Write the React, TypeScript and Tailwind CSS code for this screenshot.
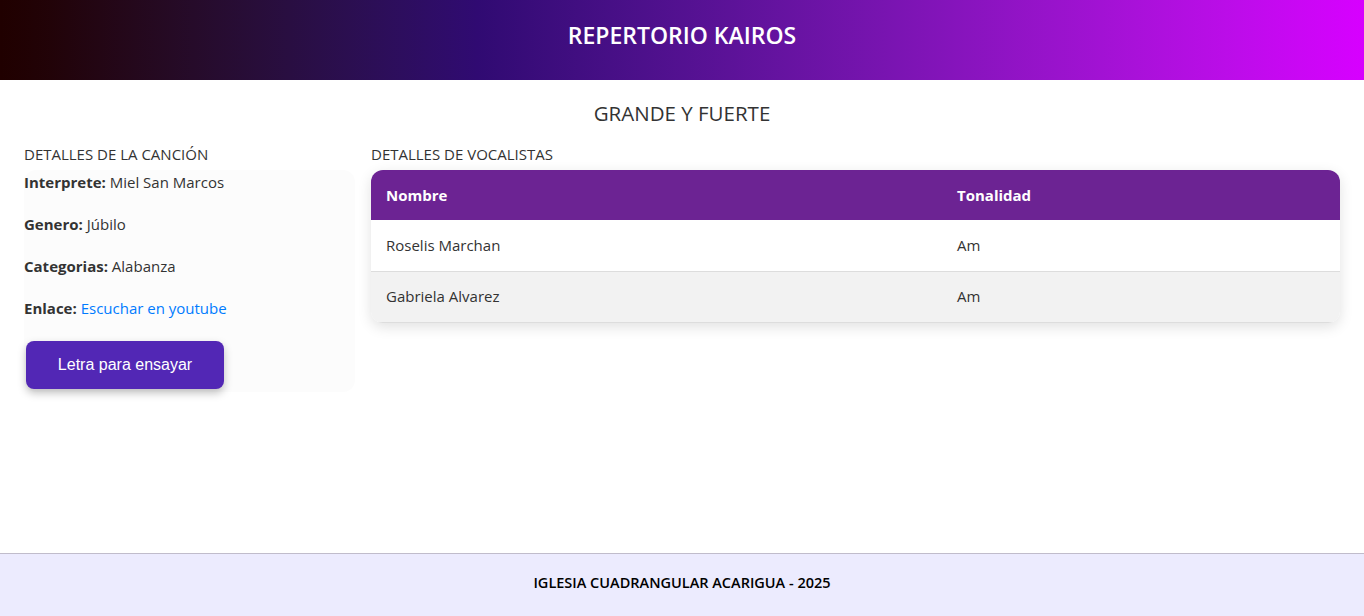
import React from 'react';

const vocalistas = [
  { nombre: 'Roselis Marchan', tono: 'Am' },
  { nombre: 'Gabriela Alvarez', tono: 'Am' },
];

const detalles = [
  { label: 'Interprete:', value: 'Miel San Marcos' },
  { label: 'Genero:', value: 'Júbilo' },
  { label: 'Categorias:', value: 'Alabanza' },
];

export default function App() {
  return (
    <div className="min-h-screen flex flex-col bg-white text-[#333] font-['Segoe_UI','Open_Sans',sans-serif]">
      <header className="h-20 pb-[9px] flex items-center justify-center bg-linear-to-r from-[#200000] via-[#300a72] via-35% to-[#d700ff]">
        <h1 className="text-white text-[23px] font-semibold">REPERTORIO KAIROS</h1>
      </header>

      <main className="flex-1 px-6 pt-[19px]">
        <h2 className="text-center text-[20.5px] leading-7 text-[#333] mb-[17px]">GRANDE Y FUERTE</h2>

        <div className="flex gap-4 items-start">
          <section className="w-[331px] shrink-0">
            <h3 className="text-[15px] leading-5 uppercase mb-[6px]">DETALLES DE LA CANCIÓN</h3>
            <div className="bg-[#fcfcfc] rounded-xl pb-[3px]">
              {detalles.map((d) => (
                <p key={d.label} className="text-[15px] leading-6 mb-[18px]">
                  <span className="font-bold">{d.label}</span> {d.value}
                </p>
              ))}
              <p className="text-[15px] leading-6">
                <span className="font-bold">Enlace:</span>{' '}
                <a href="#" className="text-[#007bff]">Escuchar en youtube</a>
              </p>
              <button className="mt-[21px] ml-[2px] w-[198px] h-12 rounded-lg bg-[#5227b5] text-white text-[16px] font-['Liberation_Sans',Arial,sans-serif] shadow-[0_4px_8px_rgba(0,0,0,0.25)]">
                Letra para ensayar
              </button>
            </div>
          </section>

          <section className="flex-1">
            <h3 className="text-[15px] leading-5 uppercase mb-[6px]">DETALLES DE VOCALISTAS</h3>
            <div className="rounded-xl overflow-hidden shadow-[0_4px_14px_rgba(0,0,0,0.12)]">
              <table className="w-full border-collapse text-[15px]">
                <thead>
                  <tr className="bg-[#6c2393] text-white h-[50px]">
                    <th className="text-left font-bold px-[15px] w-[571px]">Nombre</th>
                    <th className="text-left font-bold px-[15px]">Tonalidad</th>
                  </tr>
                </thead>
                <tbody>
                  {vocalistas.map((v, i) => (
                    <tr key={v.nombre} className={`h-[51px] border-b border-[#dddddd] ${i % 2 ? 'bg-[#f2f2f2]' : 'bg-white'}`}>
                      <td className="px-[15px]">{v.nombre}</td>
                      <td className="px-[15px]">{v.tono}</td>
                    </tr>
                  ))}
                </tbody>
              </table>
            </div>
          </section>
        </div>
      </main>

      <footer className="h-[63px] pb-[5px] border-t border-[#c0bccb] bg-[#ecebfe] flex items-center justify-center">
        <p className="text-[14.5px] font-semibold text-black">IGLESIA CUADRANGULAR ACARIGUA - 2025</p>
      </footer>
    </div>
  );
}
